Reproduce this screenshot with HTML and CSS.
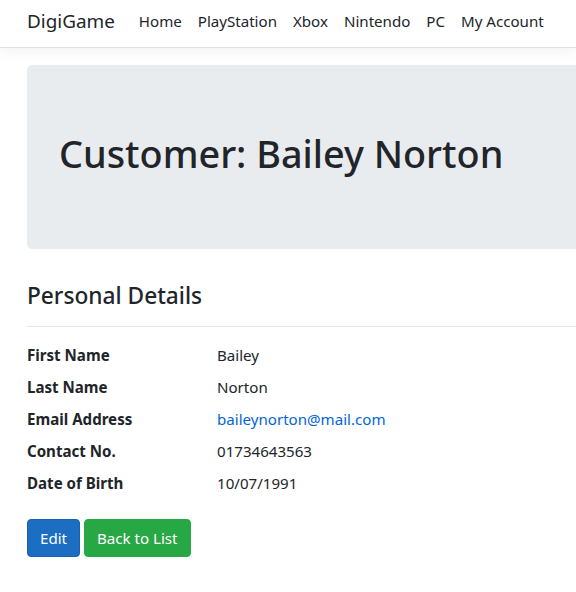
FILE: index.html
```html
<!DOCTYPE html>
<html lang="en">
<head>
<meta charset="utf-8">
<title>Customer: Bailey Norton - DigiGame</title>
<link rel="stylesheet" href="styles.css">
</head>
<body>
<header class="navbar">
  <a class="brand" href="#">DigiGame</a>
  <nav class="nav-links">
    <a href="#">Home</a>
    <a href="#">PlayStation</a>
    <a href="#">Xbox</a>
    <a href="#">Nintendo</a>
    <a href="#">PC</a>
    <a href="#">My Account</a>
  </nav>
</header>
<main class="container">
  <section class="jumbotron">
    <h1>Customer: Bailey Norton</h1>
  </section>
  <h4 class="section-title">Personal Details</h4>
  <hr class="divider">
  <dl class="details">
    <dt>First Name</dt><dd>Bailey</dd>
    <dt>Last Name</dt><dd>Norton</dd>
    <dt>Email Address</dt><dd><a class="link" href="#">baileynorton@mail.com</a></dd>
    <dt>Contact No.</dt><dd>01734643563</dd>
    <dt>Date of Birth</dt><dd>10/07/1991</dd>
  </dl>
  <div class="actions">
    <a class="btn btn-primary" href="#">Edit</a>
    <a class="btn btn-success" href="#">Back to List</a>
  </div>
</main>
</body>
</html>
```
FILE: styles.css
```css
html { overflow-x: hidden; }
body {
  margin: 0;
  font-family: "Noto Sans", "Open Sans", sans-serif;
  font-size: 15.1px;
  line-height: 24px;
  color: #212529;
  background: #fff;
}
a { text-decoration: none; }
.navbar {
  display: flex;
  align-items: center;
  height: 42px;
  padding: 0 27px 5px;
  border-bottom: 1px solid #dee2e6;
  box-shadow: 0 4px 12px rgba(0,0,0,.05);
  background: #fff;
  white-space: nowrap;
}
.brand {
  font-size: 18.9px;
  color: #212529;
  margin-right: 16px;
  line-height: 30px;
}
.nav-links { display: flex; }
.nav-links a {
  color: #212529;
  padding: 0 8px;
  line-height: 24px;
}
.container {
  width: 1140px;
  padding: 0 27px;
  margin-top: 17px;
}
.jumbotron {
  background: #e9ecef;
  border-radius: 5px;
  padding: 65px 32px 63px;
  margin-bottom: 32px;
}
.jumbotron h1 {
  margin: 0 0 8px;
  font-size: 37.8px;
  font-weight: 500;
  line-height: 48px;
}
.section-title {
  margin: 0;
  font-size: 22.7px;
  font-weight: 500;
  line-height: 29px;
}
.divider {
  margin: 16px 0;
  border: 0;
  border-top: 1px solid rgba(0,0,0,.1);
}
.details {
  display: grid;
  grid-template-columns: 190px 1fr;
  margin: 0 0 16px;
}
.details dt {
  font-weight: 700;
  margin: 0 0 8px;
}
.details dd {
  margin: 0 0 8px;
}
.link { color: #0366d6; }
.actions { display: flex; gap: 4px; }
.btn {
  display: inline-block;
  padding: 6px 12px;
  border: 1px solid transparent;
  border-radius: 4px;
  color: #fff;
  line-height: 24px;
}
.btn-primary { background: #1b6ec2; border-color: #1861ac; }
.btn-success { background: #28a745; border-color: #28a745; }
```
